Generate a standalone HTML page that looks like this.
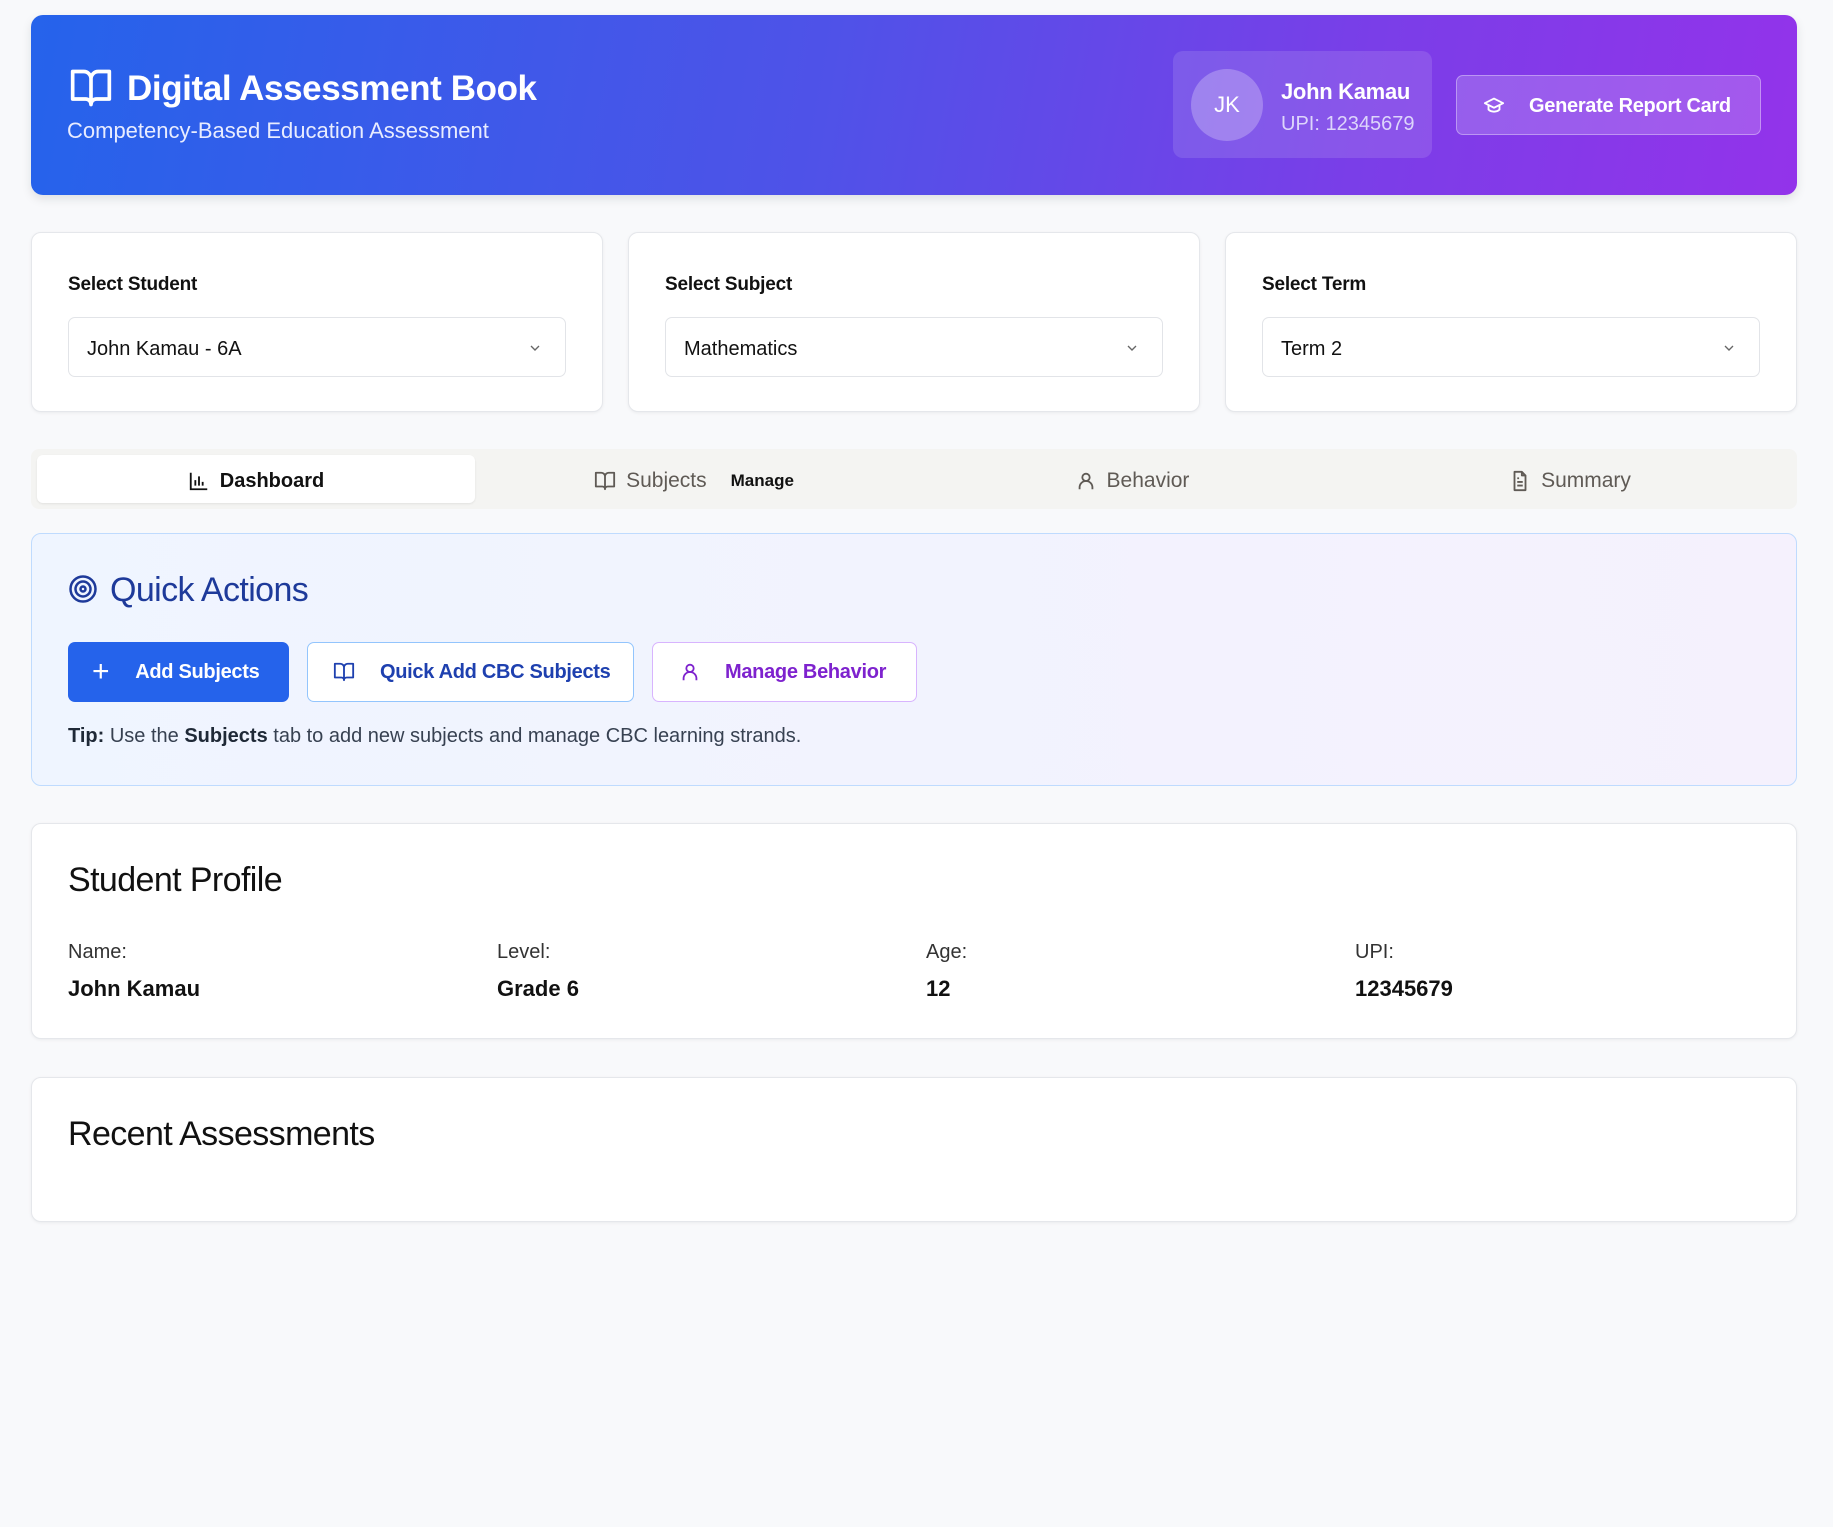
<!DOCTYPE html>
<html><head><meta charset="utf-8"><style>
*{box-sizing:border-box;margin:0;padding:0}
body{width:1833px;height:1527px;background:#f8f9fb;font-family:"Liberation Sans",sans-serif;color:#111;position:relative;overflow:hidden}
.abs{position:absolute}
.hdr{left:31px;top:15px;width:1766px;height:180px;border-radius:12px;background:linear-gradient(100deg,#2563eb 0%,#4f52e8 45%,#7a3ee8 75%,#9333ea 100%);box-shadow:0 4px 10px rgba(0,0,0,.1)}
.card{background:#fff;border:1px solid #e5e7eb;border-radius:10px;box-shadow:0 1px 3px rgba(0,0,0,.06)}
.sel{position:absolute;left:36px;top:84px;right:36px;height:60px;border:1px solid #e2e4e8;border-radius:7px;font-size:20px;padding:20px 0 0 18px;color:#111}
.sel svg{position:absolute;right:22px;top:22px}
.lbl{position:absolute;left:36px;top:41px;font-size:19px;font-weight:bold;color:#111;letter-spacing:-0.2px}
.tab{position:absolute;top:0;height:48px;display:flex;align-items:center;justify-content:center;font-size:21px;color:#5f5a55;gap:10px}
.btn{position:absolute;top:642px;height:60px;border-radius:7px;display:flex;align-items:center;font-size:20px;font-weight:bold;letter-spacing:-0.3px;white-space:nowrap;overflow:hidden}
.pl{font-size:20px;color:#333}
.pv{font-size:22px;font-weight:bold;color:#111}
</style></head><body>
<div class="abs hdr"></div>
<svg class="abs" style="left:68px;top:66px" width="46" height="44" viewBox="0 0 24 24" fill="none" stroke="#fff" stroke-width="2" stroke-linejoin="round"><path d="M2 3h6a4 4 0 0 1 4 4v14a3 3 0 0 0-3-3H2zM22 3h-6a4 4 0 0 0-4 4v14a3 3 0 0 1 3-3h7z"/></svg>
<div class="abs" style="left:127px;top:69px;font-size:35px;font-weight:bold;color:#fff;letter-spacing:-0.4px">Digital Assessment Book</div>
<div class="abs" style="left:67px;top:118px;font-size:22px;color:#e8ecff">Competency-Based Education Assessment</div>
<div class="abs" style="left:1173px;top:51px;width:259px;height:107px;border-radius:10px;background:rgba(255,255,255,.12)"></div>
<div class="abs" style="left:1191px;top:69px;width:72px;height:72px;border-radius:50%;background:rgba(255,255,255,.25);color:#fff;font-size:22px;text-align:center;line-height:72px">JK</div>
<div class="abs" style="left:1281px;top:79px;font-size:22px;font-weight:bold;color:#fff;letter-spacing:-0.3px">John Kamau</div>
<div class="abs" style="left:1281px;top:113px;font-size:20px;color:#ddd5fb">UPI: 12345679</div>
<div class="abs" style="left:1456px;top:75px;width:305px;height:60px;border-radius:7px;background:rgba(255,255,255,.18);border:1px solid rgba(255,255,255,.35)"></div>
<svg class="abs" style="left:1482px;top:94px" width="24" height="22" viewBox="0 0 24 24" fill="none" stroke="#fff" stroke-width="2" stroke-linejoin="round"><path d="M2 10l10-5 10 5-10 5z"/><path d="M6 12v5c3 3 9 3 12 0v-5"/></svg>
<div class="abs" style="left:1529px;top:95px;font-size:20px;font-weight:bold;color:#fff;letter-spacing:-0.3px">Generate Report Card</div>

<div class="abs card" style="left:31px;top:232px;width:572px;height:180px"><div class="lbl">Select Student</div><div class="sel">John Kamau - 6A<svg width="16" height="16" viewBox="0 0 24 24" fill="none" stroke="#666" stroke-width="2"><path d="M6 9l6 6 6-6"/></svg></div></div>
<div class="abs card" style="left:628px;top:232px;width:572px;height:180px"><div class="lbl">Select Subject</div><div class="sel">Mathematics<svg width="16" height="16" viewBox="0 0 24 24" fill="none" stroke="#666" stroke-width="2"><path d="M6 9l6 6 6-6"/></svg></div></div>
<div class="abs card" style="left:1225px;top:232px;width:572px;height:180px"><div class="lbl">Select Term</div><div class="sel">Term 2<svg width="16" height="16" viewBox="0 0 24 24" fill="none" stroke="#666" stroke-width="2"><path d="M6 9l6 6 6-6"/></svg></div></div>

<div class="abs" style="left:31px;top:449px;width:1766px;height:60px;border-radius:8px;background:#f4f4f2">
 <div class="abs" style="left:6px;top:6px;width:438px;height:48px;background:#fff;border-radius:6px;box-shadow:0 1px 2px rgba(0,0,0,.08)"></div>
 <div class="tab" style="left:6px;top:8px;width:438px;color:#111;font-weight:bold;font-size:20px"><svg width="22" height="22" viewBox="0 0 24 24" fill="none" stroke="#111" stroke-width="2"><path d="M3 3v18h18M8 17v-6M12 17V7M16 17v-4"/></svg>Dashboard</div>
 <div class="tab" style="left:444px;top:8px;width:438px"><svg width="22" height="22" viewBox="0 0 24 24" fill="none" stroke="#5f5a55" stroke-width="2" stroke-linejoin="round"><path d="M2 3h6a4 4 0 0 1 4 4v14a3 3 0 0 0-3-3H2zM22 3h-6a4 4 0 0 0-4 4v14a3 3 0 0 1 3-3h7z"/></svg>Subjects<span style="font-size:17px;font-weight:bold;color:#111;margin-left:14px">Manage</span></div>
 <div class="tab" style="left:882px;top:8px;width:438px"><svg width="22" height="22" viewBox="0 0 24 24" fill="none" stroke="#5f5a55" stroke-width="2"><circle cx="12" cy="8" r="4"/><path d="M5 21v-2a7 7 0 0 1 14 0v2"/></svg>Behavior</div>
 <div class="tab" style="left:1320px;top:8px;width:438px"><svg width="22" height="22" viewBox="0 0 24 24" fill="none" stroke="#5f5a55" stroke-width="2" stroke-linejoin="round"><path d="M14 2H6v20h12V6zM14 2v4h4M9 13h6M9 17h6M9 9h2"/></svg>Summary</div>
</div>

<div class="abs" style="left:31px;top:533px;width:1766px;height:253px;border-radius:10px;border:1px solid #bfdbfe;background:linear-gradient(90deg,#eff5ff,#f5f1fd)"></div>
<svg class="abs" style="left:68px;top:574px" width="30" height="30" viewBox="0 0 24 24" fill="none" stroke="#1e3a9a" stroke-width="2"><circle cx="12" cy="12" r="10"/><circle cx="12" cy="12" r="6"/><circle cx="12" cy="12" r="2"/></svg>
<div class="abs" style="left:110px;top:571px;font-size:34px;color:#1e3a9a;letter-spacing:-0.6px">Quick Actions</div>
<div class="btn" style="left:68px;width:221px;background:#2563eb;color:#fff"><span style="font-size:30px;font-weight:normal;margin:0 26px 0 24px">+</span>Add Subjects</div>
<div class="btn" style="left:307px;width:327px;background:#fff;border:1px solid #93c5fd;color:#1e40af"><svg style="margin:0 24px 0 24px" width="24" height="22" viewBox="0 0 24 24" fill="none" stroke="#1e40af" stroke-width="2" stroke-linejoin="round"><path d="M2 3h6a4 4 0 0 1 4 4v14a3 3 0 0 0-3-3H2zM22 3h-6a4 4 0 0 0-4 4v14a3 3 0 0 1 3-3h7z"/></svg>Quick Add CBC Subjects</div>
<div class="btn" style="left:652px;width:265px;background:#fff;border:1px solid #d8b4fe;color:#7e22ce"><svg style="margin:0 24px 0 26px" width="22" height="22" viewBox="0 0 24 24" fill="none" stroke="#7e22ce" stroke-width="2"><circle cx="12" cy="8" r="4"/><path d="M5 21v-2a7 7 0 0 1 14 0v2"/></svg>Manage Behavior</div>
<div class="abs" style="left:68px;top:725px;font-size:20px;color:#374151"><b style="color:#1f2937">Tip:</b> Use the <b style="color:#1f2937">Subjects</b> tab to add new subjects and manage CBC learning strands.</div>

<div class="abs card" style="left:31px;top:823px;width:1766px;height:216px"></div>
<div class="abs" style="left:68px;top:861px;font-size:34px;color:#111;letter-spacing:-0.6px">Student Profile</div>
<div class="abs pl" style="left:68px;top:941px">Name:</div><div class="abs pv" style="left:68px;top:976px">John Kamau</div>
<div class="abs pl" style="left:497px;top:941px">Level:</div><div class="abs pv" style="left:497px;top:976px">Grade 6</div>
<div class="abs pl" style="left:926px;top:941px">Age:</div><div class="abs pv" style="left:926px;top:976px">12</div>
<div class="abs pl" style="left:1355px;top:941px">UPI:</div><div class="abs pv" style="left:1355px;top:976px">12345679</div>

<div class="abs card" style="left:31px;top:1077px;width:1766px;height:145px"></div>
<div class="abs" style="left:68px;top:1115px;font-size:34px;color:#111;letter-spacing:-0.6px">Recent Assessments</div>
</body></html>
